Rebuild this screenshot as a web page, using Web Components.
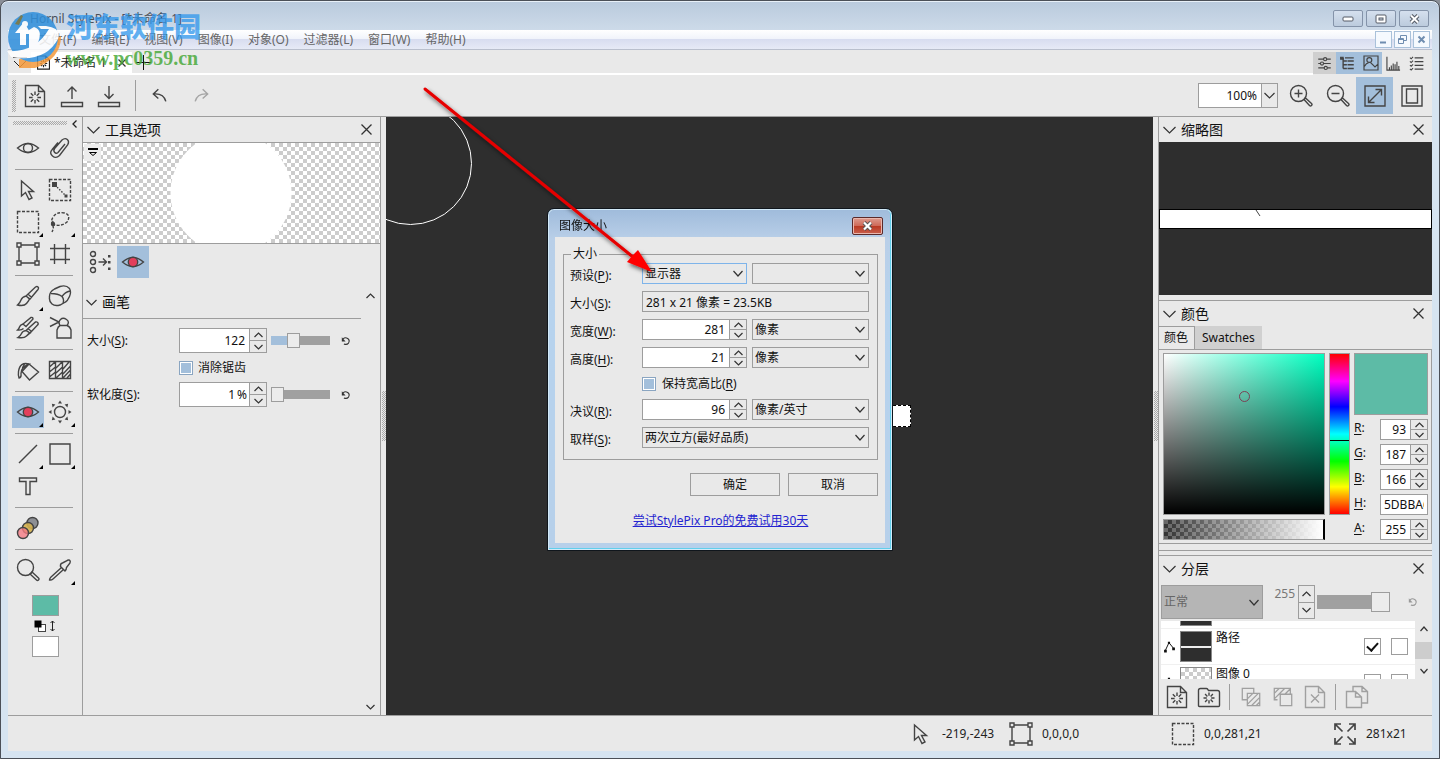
<!DOCTYPE html>
<html lang="zh-CN">
<head>
<meta charset="utf-8">
<title>Hornil StylePix - [*未命名 1]</title>
<style>
html,body{margin:0;padding:0;background:#8a8f98;}
body{font:12px/18px "Noto Sans","Noto Sans CJK SC",sans-serif;color:#111;overflow:hidden;}
</style>
</head>
<body>
<style-pix-window></style-pix-window>
<script>
const BASE = `
:host,*{box-sizing:border-box}
button{font:inherit;color:inherit;margin:0;padding:0;border:0;background:none;display:flex;align-items:center;justify-content:center}
input,select{font:inherit;color:inherit;margin:0;border-radius:0;outline:0}
svg{display:block}
u{text-underline-offset:2px}
.sp{flex:1}
.on{background:#a3bfdb}
`;
const DOTS = 'repeating-conic-gradient(#aaa 0 25%,transparent 0 50%) 0 0/2px 2px';
const FIELD = `
.spin,.combo{display:flex;border:1px solid #9d9d9d;background:#fff;height:21px;min-width:0}
.spin input,.combo input{flex:1;min-width:0;width:0;border:0;padding:0 4px;text-align:right;background:#fff;height:100%}
.spin .btns{width:17px;flex:none;display:flex;flex-direction:column;border-left:1px solid #9d9d9d;background:#e9e9e9}
.spin .btns button{flex:1;min-height:0}
.spin .btns button+button{border-top:1px solid #9d9d9d}
.pick{display:grid;height:21px;min-width:0}
.pick>*{grid-area:1/1}
.pick select{appearance:none;width:100%;height:100%;border:1px solid #9d9d9d;background:#e9e9e9;padding:0 2px}
.pick svg{place-self:center end;margin-right:4px;pointer-events:none}
input[type=checkbox]{appearance:none;width:14px;height:14px;border:1px solid #9d9d9d;background:#fff;flex:none}
input[type=checkbox].fill:checked{border-color:#8aa5c1;box-shadow:inset 0 0 0 1px #fff;background:#a3bfdb}
input[type=range]{appearance:none;background:none;width:59px;height:16px;padding:0}
input[type=range]::-webkit-slider-runnable-track{height:9px;background:linear-gradient(90deg,#a3bfdb var(--v,0%),#a0a0a0 var(--v,0%))}
input[type=range]::-webkit-slider-thumb{appearance:none;width:13px;height:15px;margin-top:-3px;background:#ececec;border:1px solid #9d9d9d}
`;
const chev = (w,h,dir='down',c='#333') => `<svg width="${w}" height="${h}" viewBox="0 0 ${w} ${h}" fill="none" stroke="${c}" stroke-width="1.2"><path d="${dir==='down'?`M.5 1 ${w/2} ${h-1} ${w-.5} 1`:`M.5 ${h-1} ${w/2} 1 ${w-.5} ${h-1}`}"/></svg>`;
const cross = (s,c='#333') => `<svg width="${s}" height="${s}" viewBox="0 0 ${s} ${s}" stroke="${c}" stroke-width="1.3"><path d="M.5 .5 ${s-.5} ${s-.5}M${s-.5} .5 .5 ${s-.5}"/></svg>`;
const spin = (id,v) => `<span class="spin"><input id="${id}" value="${v}"><span class="btns"><button aria-label="增加">${chev(9,6,'up')}</button><button aria-label="减少">${chev(9,6)}</button></span></span>`;
const pick = (id,v,label='') => `<span class="pick"><select id="${id}"${label?` aria-label="${label}"`:''}><option>${v}</option></select>${chev(10,7)}</span>`;

function define(name, css, html, after){
  const t = document.createElement('template');
  t.innerHTML = `<style>${BASE}${css}</style>${html}`;
  customElements.define(name, class extends HTMLElement{
    constructor(){ super(); this.attachShadow({mode:'open'}).append(t.content.cloneNode(true)); }
    connectedCallback(){ if(after) after(this, this.shadowRoot); }
  });
}

const burst = (x,y,r) => { let d=''; for(let i=0;i<8;i++){const a=i*Math.PI/4;d+=`M${(x+Math.cos(a)*r*.4).toFixed(1)} ${(y+Math.sin(a)*r*.4).toFixed(1)}L${(x+Math.cos(a)*r).toFixed(1)} ${(y+Math.sin(a)*r).toFixed(1)}`;} return `<path d="${d}"/>`; };
const ICONS = {
  newdoc:`<path d="M2.5 1.5h13l6 6v15h-19zM15.5 1.5v6h6"/>${burst(12,13.5,6)}`,
  folder:`<path d="M1.5 20.5v-15q0-2 2-2h6q1 0 2 2h9q2 0 2 2v13q0 1-1 1h-19q-1 0-1-1z"/>${burst(12,13,5.5)}`,
  open:`<path d="M12 15V3M7.500 7.500 12 3l4.500 4.500M1.500 18.500h21v4h-21z"/>`,
  save:`<path d="M12 2v12M7.500 10 12 14.500 16.500 10M1.500 18.500h21v4h-21z"/>`,
  undo:`<path d="M10 4 4 9.500 10 15M4.500 9.500q12-1 14.500 9" stroke-width="1.700"/>`,
  redo:`<path d="M14 4l6 5.500-6 5.500M19.500 9.500q-12-1-14.500 9" stroke-width="1.700"/>`,
  zoomin:`<circle cx="9.500" cy="9.500" r="8"/><path d="M5.500 9.500h8M9.500 5.500v8M15 15.500l5.500 6q1 1 2 0t0-2l-6-5.500z"/>`,
  zoomout:`<circle cx="9.500" cy="9.500" r="8"/><path d="M5.500 9.500h8M15 15.500l5.500 6q1 1 2 0t0-2l-6-5.500z"/>`,
  zoom:`<circle cx="9.500" cy="9.500" r="8"/><path d="M14 16l6.500 6q1 1 2 0t0-2l-6.500-6z"/>`,
  actual:`<path d="M2 2h20v20H2zM5.500 18.500l13-13M12.500 5.500h6v6M5.500 12.500v6h6"/>`,
  fit:`<path d="M2 2h20v20H2zM6.500 5h11v14h-11z"/>`,
  eye:`<path d="M1.500 12Q12 3 22.500 12 12 21 1.500 12z"/><circle cx="12" cy="12" r="4.500"/>`,
  redeye:`<path d="M1.500 12Q12 3 22.500 12 12 21 1.500 12z"/><circle cx="12" cy="12" r="4.700" fill="#e23f5c"/>`,
  clip:`<path d="M17 8l-7 8.500q-2 1.500-3.500-.3t.3-4L14 4q3-2.500 5.300-.5t.3 5.300L11.500 19.500q-3.500 3.500-7 .5t-.3-6.500L10 6.500"/>`,
  arrow:`<path d="M5.500 3v15l4-3.500 3.500 7 3-1.500-3.500-6.500h5z"/>`,
  seltrans:`<path stroke-dasharray="3 1.500" d="M1.500 1.500h21v21h-21z"/><path stroke-dasharray="1.500 1.500" d="M7 7l11 11"/><path fill="currentColor" stroke="none" d="M4 4h5v5H4zM16.500 16.500h3v3h-3z"/>`,
  rectsel:`<path stroke-dasharray="3 1.500" d="M1.500 1.500h21v21h-21z"/>`,
  lasso:`<path stroke-dasharray="3 1.500" d="M5 14.500q-3-3 .5-8t11-3.500q7 2 2.500 9-6 5-14 2.500zM5 11q-1 3 0 5t-1 6"/><circle cx="5" cy="14" r="1.500" fill="currentColor"/>`,
  transform:`<path d="M3 3h18v18H3z"/><path fill="#e9e9e9" d="M1 1h4v4H1zM19 1h4v4h-4zM1 19h4v4H1zM19 19h4v4h-4z"/>`,
  crop:`<path d="M6.500 2v20M17.500 2v20M2 6.500h20M2 17.500h20"/>`,
  brush:`<path d="M10 12l9.500-9q1.500-1 2.500 0t0 2.500L14 15zM10 12q-4 1-5 4t-3.500 5q6.500 1.500 9-1.500t3-4.500zM12 10l3.500 3.500"/>`,
  eraser:`<path d="M1.500 13.500Q1 8 6.500 5L12 2.500q6-2 9.500 2 2 3.500 0 8t-4 5.500L12 21q-5 1.500-8-1t-2.500-6.500zM3 9.500q7 0 11 3 2.500 3 1 6.500M14 12.500q3-4.500 8-5.500"/>`,
  brushes:`<path d="M7 8l8-6.500q2-.5 2 1.500l-7 7.500zM7 8q-3 1-3.500 3t-2 3q4 .5 6-1.500M10 14.500l9.500-8.500q2-.5 2.500 1t-.5 2L14 17zM10 14.500q-3.500.5-4.500 3t-3.500 4q6 1 8.500-1.500t3.500-3zM12 12.500l3.500 3"/>`,
  stamp:`<path d="M2 1.500l9 4.500-9 4.500M12 9.500Q10 6 12.500 3.500t6 0 .5 6M12 9.500h7q3 1 4 4.500v8H9v-8q1-3.500 3-4.500z"/>`,
  bucket:`<path d="M13 6l9.500 8-9 8-7.500-8.500zM13 6Q4 3.500 2.500 13.500q-.5 4 .5 6.500 2.500-.5 2-4.500 0-6 8-9.500zM9 5.500Q6 9 6 13.500"/>`,
  pattern:`<path d="M1.500 3.500h21v17h-21zM7.500 3.500v17M14.500 3.500v17M1.500 9 7 4M1.500 14 7.500 9M1.500 19l6-5M8 10l6-6M8 15l6.500-6M8 20l6.500-6M15 11l6-7M15 16l7.500-8M15 20l7.500-8M19 20l3.500-4"/>`,
  sun:`<circle cx="12" cy="12" r="5.500"/><g fill="currentColor" stroke="none">${[0,45,90,135,180,225,270,315].map(a=>`<path transform="rotate(${a} 12 12)" d="M10 3.500h4L12 .5z"/>`).join('')}</g>`,
  line:`<path d="M3 21 21 3"/>`,
  rect:`<path d="M2 2h20v20H2z"/>`,
  tee:`<path d="M3.500 4h17v3.500h-6.500v13h-4v-13H3.500z"/>`,
  blobs:`<circle cx="16.500" cy="7" r="5.500" fill="#8d8f94"/><circle cx="12" cy="12" r="5.500" fill="#d4b04d" fill-opacity=".9"/><circle cx="7" cy="17" r="5.500" fill="#f47b83" fill-opacity=".8"/>`,
  dropper:`<path d="M13.500 9.500 3 19q-1.500 1.500-1.500 3 2 .3 3.500-1L15.500 11.500M12.500 8.500l4.500 4.500q1.500-1.500 1.500-3.500l3.500-4.500q.8-2-.5-2.800T18.500 3L14.500 5q-2.500.5-2 3.500z"/>`,
  dots:`<circle cx="4" cy="4" r="2.500"/><circle cx="4" cy="12" r="2.500"/><circle cx="4" cy="20" r="2.500"/><path d="M9.500 12h8M14 8.500l3.500 3.500-3.500 3.500"/><path stroke="none" fill="currentColor" d="M19 5h2.500v2.500H19zM19 11h2.500v2.500H19zM19 17.500h2.500V20H19z"/>`,
  expand:`<path stroke-width="1.700" d="M2 8V2h6M2 2l7.500 7.500M16 2h6v6M22 2l-7.500 7.500M2 16v6h6M2 22l7.500-7.500M22 16v6h-6M22 22l-7.500-7.500"/>`,
  sliders:`<path d="M2 5h20M2 12h20M2 19h20"/><g fill="#cfcfcf"><circle cx="13" cy="5" r="2.500"/><circle cx="8" cy="12" r="2.500"/><circle cx="14" cy="19" r="2.500"/></g>`,
  tree:`<path d="M5 3v17M5 8h6M5 14h6M5 20h6M8 3h14M12 8h10M12 14h10M12 20h10" stroke-width="2.200"/><path fill="currentColor" d="M1 2h4v3H1z"/>`,
  picture:`<path d="M1.500 1.500h21v21h-21zM2 17q3-5 6.500-5.500M11 11l7 7 4-4"/><circle cx="9.500" cy="7.500" r="3.700"/>`,
  histo:`<path d="M1.500 1v21.500h21M5.500 22v-4M8.500 22v-7M11.500 22V12M14.500 22v-9M17.500 22V9M20.500 22v-6"/>`,
  list:`<path d="M9 3h14M9 9h14M9 15h14M9 21h14M1.500 2.500 3.500 4.500 6.500 1.500M1.500 8.500l2 2 3-3M1.500 14.500l2 2 3-3M1.500 20.500l2 2 3-3"/>`,
  merge:`<path d="M15 8V2.500H2.500V15H8M8 8h13.500v13.500H8zM8 14l6-6M8 20 20 8M13 21l8-8M18 21l3-3"/>`,
  below:`<path d="M9 9h12.500v12.500H9zM6 15H2.500V2.500H20V9M2.500 8l5.500-5.500M2.500 14 14 2.500M14 9l6-6"/>`,
  deldoc:`<path d="M2.500 1.500h13l6 6v15h-19zM15.500 1.500v6h6M8 9.500l8 8M16 9.500l-8 8"/>`,
  copydoc:`<path d="M8 6V1.500h9l5.500 5V18H17M17 1.500v5h5.500M1.500 6.500h9l6 5.500v10.500h-15zM10.500 6.500V12h6"/>`,
  reset:`<path d="M5 7q5-5 11-1t2 11q-4 5-11 2" stroke-width="2.600"/><path d="M2 3v10h9z" fill="currentColor" stroke="none"/>`,
  path:`<path d="M4 20 11 5l9 11"/><path fill="currentColor" stroke="none" d="M2 18h5v5H2zM9 3h4v4H9zM17 14h5v5h-5z"/>`
};
customElements.define('pix-icon', class extends HTMLElement{
  constructor(){ super(); this.attachShadow({mode:'open'}); }
  connectedCallback(){
    const s = this.getAttribute('size') || 24;
    this.shadowRoot.innerHTML = `<style>:host{display:block;flex:none;width:${s}px;height:${s}px}svg{display:block}</style>
    <svg width="${s}" height="${s}" viewBox="0 0 24 24" fill="none" stroke="currentColor" stroke-width="${s<20?1.8:1.4}">${ICONS[this.getAttribute('name')]||''}</svg>`;
  }
});

define('title-bar', `
:host{display:flex;height:29px;align-items:flex-start;padding:8px 3px 0 22px;gap:3px;color:#4a505a}
h1{font:inherit;font-size:12px;line-height:20px;margin:0;flex:1}
button{width:30px;height:17px;border:1px solid #8493a9;border-radius:2px;background:linear-gradient(#d5e0ee,#bccbdd);margin-top:1px}
`, `<h1>Hornil StylePix - [*未命名 1]</h1>
<button aria-label="最小化"><svg width="12" height="6"><rect x="1" y="1" width="10" height="4" rx="1" fill="#fff" stroke="#555b66"/></svg></button>
<button aria-label="最大化"><svg width="12" height="10"><rect x="1" y="1" width="10" height="8" rx="1" fill="#fff" stroke="#555b66"/><rect x="4" y="4" width="4" height="2" fill="#ccd6e4" stroke="#555b66"/></svg></button>
<button aria-label="关闭"><svg width="13" height="10" fill="none"><path d="M3 1.500l7 7M10 1.500l-7 7" stroke="#555b66" stroke-width="4"/><path d="M3 1.500l7 7M10 1.500l-7 7" stroke="#fff" stroke-width="2"/></svg></button>`);

define('menu-bar', `
:host{display:flex;height:20px;align-items:center;padding:0 2px 0 31px;background:linear-gradient(#fff,#f1f4fb 45%,#d8ddf0 50%,#e6eaf6);border-bottom:1px solid #b9bfcd;color:#666}
nav{display:flex;gap:15px;flex:1}
a{color:inherit;text-decoration:none;white-space:nowrap}
button{width:17px;height:17px;border:1px solid #a9c1da;background:#f5f9fe;margin-left:2px;color:#6f8db0}
`, `<nav><a href="#">文件(F)</a><a href="#">编辑(E)</a><a href="#">视图(V)</a><a href="#">图像(I)</a><a href="#">对象(O)</a><a href="#">过滤器(L)</a><a href="#">窗口(W)</a><a href="#">帮助(H)</a></nav>
<button aria-label="最小化文档"><svg width="9" height="9"><path d="M1 7.500h6" stroke="currentColor" stroke-width="2"/></svg></button>
<button aria-label="还原文档"><svg width="9" height="9" fill="none" stroke="currentColor"><path d="M2.500 3V.5h6v5H6M.5 3.500h5v5h-5zM.5 4.500h5"/></svg></button>
<button aria-label="关闭文档"><svg width="9" height="9"><path d="M1.500 1.500l6 6M7.500 1.500l-6 6" stroke="currentColor" stroke-width="2"/></svg></button>`);

define('tab-strip', `
:host{display:flex;height:25px;background:#e9e9e9;align-items:stretch;padding-top:2px;color:#222}
.tabs{flex:1;display:flex;border-bottom:2px solid #fff}
.drop{width:23px}
.tab{display:flex;align-items:center;gap:3px;width:101px;background:#fff;padding:0 6px 0 5px}
.tab span{flex:1;white-space:nowrap}
.add{width:23px}
.views{display:flex;padding-right:4px;color:#444}
.views button{width:23px;height:22px}
.first{background:#cfcfcf}
`, `<div class="tabs"><button class="drop" aria-label="文档列表"><svg width="16" height="14" fill="none" stroke="#222"><path d="M1 1.500h14M2 5l6 6 6-6"/></svg></button>
<div class="tab"><pix-icon name="newdoc" size="15"></pix-icon><span>*未命名 1</span><button aria-label="关闭标签">${cross(8)}</button></div>
<button class="add" aria-label="新建标签"><svg width="15" height="15" stroke="#111"><path d="M0 7.500h15M7.500 0v15"/></svg></button></div>
<div class="views"><button class="first" aria-label="工具选项"><pix-icon name="sliders" size="15"></pix-icon></button><button class="on" aria-label="分层"><pix-icon name="tree" size="15"></pix-icon></button><button class="on" aria-label="缩略图"><pix-icon name="picture" size="16"></pix-icon></button><button aria-label="直方图"><pix-icon name="histo" size="15"></pix-icon></button><button aria-label="历史"><pix-icon name="list" size="15"></pix-icon></button></div>`);

define('tool-bar', FIELD+`
:host{display:flex;height:42px;background:#e9e9e9;border-bottom:1px solid #9d9d9d;align-items:center;padding:0 2px 0 4px;color:#444}
.grip{width:4px;height:32px;background:${DOTS}}
button{width:37px;height:37px;flex:none}
.sep{width:1px;height:31px;background:#9d9d9d;margin:0 5px 0 8px}
.redo{color:#a5a5a5;margin-left:4px}
.combo{width:80px;height:25px;margin-right:4px;color:#111}
.combo button{width:16px;height:auto;border-left:1px solid #9d9d9d;background:#e9e9e9}
`, `<span class="grip"></span>
<button aria-label="新建"><pix-icon name="newdoc"></pix-icon></button><button aria-label="打开"><pix-icon name="open"></pix-icon></button><button aria-label="保存"><pix-icon name="save"></pix-icon></button>
<span class="sep"></span><button aria-label="撤消"><pix-icon name="undo" size="20"></pix-icon></button><button class="redo" aria-label="重做"><pix-icon name="redo" size="20"></pix-icon></button><span class="sp"></span>
<span class="combo"><input aria-label="缩放" value="100%"><button aria-label="缩放列表">${chev(11,7)}</button></span>
<button aria-label="放大"><pix-icon name="zoomin"></pix-icon></button><button aria-label="缩小"><pix-icon name="zoomout"></pix-icon></button><button class="on" aria-label="实际大小"><pix-icon name="actual"></pix-icon></button><button aria-label="适合窗口"><pix-icon name="fit"></pix-icon></button>`);

const tool = (n,l,o='') => `<button class="${o}" aria-label="${l}"><pix-icon name="${n}"></pix-icon></button>`;
define('tool-box', `
:host{display:block;width:75px;flex:none;background:#e9e9e9;border-right:1px solid #9d9d9d;color:#444;padding-left:4px}
.top{display:flex;height:15px;align-items:flex-start;padding:3px 5px 0 1px;gap:5px}
.grip{flex:1;height:4px;margin-top:1px;background:${DOTS}}
.grid{display:grid;grid-template-columns:32px 32px}
.grid button{height:32px;position:relative}
.more::after{content:"";position:absolute;right:1px;bottom:1px;border:2px solid #000;border-top-color:transparent;border-left-color:transparent}
hr{grid-column:1/-1;width:58px;height:1px;border:0;background:#9d9d9d;margin:5px 0 4px 3px}
.colors{display:flex;flex-direction:column;align-items:center;padding:9px 4px 0 0;gap:4px}
.sw{width:27px;height:21px;border:1px solid #9d9d9d;background:#fff}
.fg{background:#5dbba6}
`, `<div class="top"><span class="grip"></span><svg width="5" height="8" fill="none" stroke="#222" stroke-width="1.300"><path d="M4.500.5 1 4l3.500 3.500"/></svg></div>
<div class="grid">${tool('eye','查看')}${tool('clip','附件')}<hr>${tool('arrow','选择')}${tool('seltrans','变换选区')}${tool('rectsel','矩形选区','more')}${tool('lasso','套索','more')}${tool('transform','变换')}${tool('crop','裁剪')}<hr>${tool('brush','画笔','more')}${tool('eraser','橡皮擦')}${tool('brushes','克隆画笔')}${tool('stamp','图章')}<hr>${tool('bucket','填充')}${tool('pattern','渐变')}<hr>${tool('redeye','红眼','on more')}${tool('sun','亮度','more')}<hr>${tool('line','直线','more')}${tool('rect','矩形','more')}${tool('tee','文本')}<span></span><hr>${tool('blobs','颜色')}<span></span><hr>${tool('zoom','缩放')}${tool('dropper','吸管','more')}</div>
<div class="colors"><button class="sw fg" aria-label="前景色"></button><svg width="22" height="12"><rect x="4.500" y="4.500" width="7" height="7" fill="#fff" stroke="#444"/><rect x=".5" y=".5" width="7" height="7" fill="#000"/><path d="M18.500 1v10M16.500 3l2-2 2 2M16.500 9l2 2 2-2" fill="none" stroke="#222"/></svg><button class="sw" aria-label="背景色"></button></div>`);

define('dock-panel', `
:host{display:flex;flex-direction:column;min-height:0;background:#e9e9e9}
header{display:flex;height:25px;flex:none;align-items:center;padding:0 8px 0 4px;gap:5px}
h2{flex:1;margin:0;font:inherit;font-size:14px;line-height:20px}
`, `<header>${chev(13,8)}<h2></h2><button aria-label="关闭面板">${cross(11)}</button></header><slot></slot>`,
(el,r)=>{ r.querySelector('h2').textContent = el.getAttribute('heading'); });

define('tool-options', FIELD+`
:host{display:flex;flex-direction:column;width:298px;flex:none;background:#e9e9e9;border-right:1px solid #9d9d9d;min-height:0}
.preview{height:102px;border:1px solid #9d9d9d;border-width:1px 0;background:radial-gradient(circle 61px at 148px 50px,#fff 60px,transparent 61px),repeating-conic-gradient(#ccc 0 25%,#fff 0 50%) 0 0/8px 8px}
.preview button{width:17px;height:17px;margin:1px;background:#ececec}
.modes{display:flex;height:40px;padding:2px;color:#444}
.modes button{width:32px;height:32px}
.body{display:flex;flex:1;min-height:0}
.main{flex:1}
.scroll{display:flex;flex-direction:column;justify-content:space-between;width:19px;padding:9px 0 5px;align-items:center;color:#555}
h3{margin:0;font:inherit;font-size:14px;line-height:20px;display:flex;align-items:center;gap:5px;height:35px;border-bottom:1px solid #9d9d9d;padding:2px 3px 0}
.form{display:grid;grid-template-columns:88px 88px 59px auto;column-gap:4px;row-gap:3px;align-items:center;padding:9px 4px}
.form .spin{height:25px}
.check{grid-column:2/-1;display:flex;gap:5px;align-items:center;height:23px}
.rst{margin-left:7px;justify-self:start;color:#333}
.pct input{padding-right:0}.pct i{font-style:normal;line-height:23px;padding:0 2px}
`, `<dock-panel heading="工具选项"></dock-panel>
<div class="preview"><button aria-label="预览选项"><svg width="10" height="9" fill="none" stroke="#000"><path d="M0 1h10" stroke-width="2"/><path d="M1.500 4.500h7L5 7.500z"/></svg></button></div>
<div class="modes"><button aria-label="间距"><pix-icon name="dots"></pix-icon></button><button class="on" aria-label="红眼"><pix-icon name="redeye"></pix-icon></button></div>
<div class="body"><div class="main"><h3>${chev(11,7)}画笔</h3>
<div class="form"><label for="bs">大小(<u>S</u>):</label>${spin('bs',122)}<input type="range" value="35" style="--v:30%" aria-label="大小"><button class="rst" aria-label="重置大小"><pix-icon name="reset" size="10"></pix-icon></button>
<span class="check"><input type="checkbox" class="fill" id="aa" checked><label for="aa">消除锯齿</label></span>
<label for="sf">软化度(<u>S</u>):</label>${spin('sf','1').replace('class="spin"','class="spin pct"').replace('<span class="btns">','<i>%</i><span class="btns">')}<input type="range" value="0" aria-label="软化度"><button class="rst" aria-label="重置软化度"><pix-icon name="reset" size="10"></pix-icon></button></div></div>
<div class="scroll">${chev(9,6,'up')}${chev(9,6)}</div></div>`);

define('split-grip', `
:host{display:flex;align-items:center;justify-content:center;width:5px;flex:none;background:#e9e9e9}
i{width:4px;height:50px;background:${DOTS}}
`, `<i></i>`);

define('canvas-view', `
:host{display:flex;flex:1;min-width:0;align-items:center;justify-content:center;background:#2e2e2e;position:relative;overflow:hidden}
.doc{width:282px;height:22px;background:#fff;border:1px dashed #000}
.brush{position:absolute;left:-37px;top:-15px;width:123px;height:123px;border:1px solid #fff;border-radius:50%}
`, `<div class="doc"></div><div class="brush"></div>`);

define('thumb-view', `
:host{display:flex;align-items:center;height:153px;background:#2e2e2e}
div{flex:1;height:20px;background:#fff;border:1px solid #000}
svg{margin-left:35%}
`, `<div><svg width="8" height="8"><path d="M1 0l4 6" stroke="#444"/></svg></div>`);

const ch = (id,k,v) => `<label for="${id}"><u>${k}</u>:</label>${spin(id,v)}`;
define('color-panel', FIELD+`
:host{display:block;padding-bottom:6px}
.tabs{display:flex;height:23px}
.tabs button{padding:0 7px;background:#d0d0d0}
.tabs .cur{background:#e9e9e9;border:1px solid #9d9d9d;border-width:1px 1px 0 0;padding:0 6px 0 5px}
.box{display:grid;grid-template-columns:minmax(0,162px) 21px 1fr;gap:4px;padding:3px 3px 3px 4px;border:1px solid #9d9d9d;border-left:0}
.sv{height:162px;border:1px solid #9d9d9d;background:linear-gradient(transparent,#000),linear-gradient(90deg,#fff,#00ffc0);position:relative}
.sv i{position:absolute;left:47%;top:23%;width:11px;height:11px;border:1px solid #7b4154;border-radius:50%}
.hue{border:1px solid #9d9d9d;background:linear-gradient(#000,#000) 0 86px/100% 1px no-repeat,linear-gradient(red,#f0f 17%,#00f 33%,#0ff 50%,#0f0 67%,#ff0 83%,red)}
.alpha{height:21px;border:1px solid #9d9d9d;border-right:2px solid #000;background:linear-gradient(90deg,transparent,#fff),repeating-conic-gradient(#333 0 25%,#666 0 50%) 0 0/8px 8px}
.rgb{grid-row:1/3;grid-column:3;display:grid;grid-template-columns:26px minmax(0,48px);row-gap:4px;align-content:start}
.now{grid-column:1/-1;height:62px;border:1px solid #9d9d9d;background:#5dbba6}
.hex{height:21px;border:1px solid #9d9d9d;width:100%;padding:0 3px}
.spin input{padding:0 4px 0 0}
label{line-height:18px}
`, `<div class="tabs"><button class="cur">颜色</button><button>Swatches</button></div>
<div class="box"><div class="sv"><i></i></div><div class="hue"></div>
<div class="rgb"><div class="now"></div>${ch('r','R',93)}${ch('g','G',187)}${ch('b','B',166)}<label for="h"><u>H</u>:</label><input class="hex" id="h" value="5DBBA6">${ch('a','A',255)}</div>
<div class="alpha"></div></div>`);

const layer = (name,kind) => `<li><pix-icon name="path" size="13"></pix-icon><span class="th ${kind}"></span><span class="nm">${name}</span><input type="checkbox" aria-label="显示 ${name}" ${kind==='clear'?'':'checked'}><input type="checkbox" aria-label="锁定 ${name}"></li>`;
define('layer-panel', FIELD+`
:host{display:flex;flex-direction:column;flex:1;min-height:0;padding-left:2px}
.top{display:flex;height:40px;flex:none;align-items:flex-start;padding:4px 14px 0 0;color:#777}
.top .pick{width:102px;height:34px}
.top select{background:#b5b5b5;color:#666;opacity:1}
.spin{height:34px;background:none;border:0;width:52px}
.spin input{background:none;height:18px;padding:0 3px 0 0;color:#777}
.spin .btns{border:1px solid #9d9d9d}
input[type=range]{width:73px;height:34px;margin:0 0 0 2px}
input[type=range]::-webkit-slider-runnable-track{height:14px}
input[type=range]::-webkit-slider-thumb{width:19px;height:20px;margin-top:-3px}
.mid{display:flex;flex:1;min-height:0}
ul{list-style:none;margin:0;padding:0;flex:1;background:#fff;height:100%;overflow:hidden}
li{display:flex;height:36px;gap:4px;align-items:center;padding:0 7px 0 2px;border-top:1px solid #f0f0f0}
.th{width:32px;height:31px;border:1px solid #888;background:#2e2e2e}
.img{background:linear-gradient(transparent 14px,#eee 14px,#eee 16px,transparent 16px) #2e2e2e}
.clear{background:repeating-conic-gradient(#ccc 0 25%,#fff 0 50%) 0 0/8px 8px}
.nm{flex:1;align-self:flex-start}
li input[type=checkbox]{width:17px;height:17px;margin-left:6px;display:grid;place-items:center}
li input:checked::after{content:"";width:9px;height:5px;border:solid #111;border-width:0 0 2px 2px;transform:rotate(-48deg);margin-bottom:3px}
.scroll{width:17px;display:flex;flex-direction:column;align-items:center;justify-content:space-between;padding:5px 0}
.scroll i{width:17px;height:17px;background:#cdcdcd}
.acts{display:flex;height:36px;flex:none;align-items:center;color:#444}
.acts button{width:32px;height:32px}
.acts .off{color:#a0a0a0}
.sep{width:1px;height:26px;background:#9d9d9d;margin:0 5px 0 4px}
`, `<div class="top">${pick('mode','正常','混合模式').replace('<select','<select disabled')}${spin('op',255).replace('<input','<input aria-label="不透明度"')}<input type="range" value="100" aria-label="不透明度滑块"><span class="sp"></span><button style="height:34px;color:#999" aria-label="重置"><pix-icon name="reset" size="10"></pix-icon></button></div>
<div class="mid"><ul>${layer('','dark')}${layer('路径','img')}${layer('图像 0','clear')}</ul><div class="scroll">${chev(8,6,'up')}<i></i>${chev(8,6)}</div></div>
<div class="acts"><button aria-label="新建图层"><pix-icon name="newdoc"></pix-icon></button><button aria-label="新建组"><pix-icon name="folder"></pix-icon></button><span class="sep"></span><button class="off" aria-label="合并"><pix-icon name="merge" size="22"></pix-icon></button><button class="off" aria-label="向下合并"><pix-icon name="below" size="22"></pix-icon></button><button class="off" aria-label="删除"><pix-icon name="deldoc"></pix-icon></button><span class="sep"></span><button class="off" aria-label="复制"><pix-icon name="copydoc"></pix-icon></button></div>`);

define('status-bar', `
:host{display:flex;height:36px;flex:none;background:#e9e9e9;border-top:1px solid #9d9d9d;justify-content:flex-end;color:#222}
span{display:flex;align-items:center;gap:9px;width:162px}
pix-icon{color:#444}
span:first-of-type{width:100px}span:last-of-type{width:99px}
`, `<span><pix-icon name="arrow"></pix-icon>-219,-243</span><span><pix-icon name="transform"></pix-icon>0,0,0,0</span><span><pix-icon name="rectsel"></pix-icon>0,0,281,21</span><span><pix-icon name="expand"></pix-icon>281x21</span>`);

define('size-dialog', FIELD+`
:host{position:fixed;inset:0;margin:auto;width:346px;height:343px;display:flex;flex-direction:column;border:1px solid #10161c;border-radius:7px 7px 0 0;padding:0 7px 7px;background:linear-gradient(#9fbbdb,#b9cfe8 30px,#b7d3ee 110px,#b7d0ea);box-shadow:inset 0 0 0 1px #d3eaf8,inset -1px -1px 0 1px #62cfec}
header{display:flex;height:28px;flex:none;align-items:center;padding:6px 2px 0 4px}
h2{flex:1;margin:0;font:inherit}
header button{width:31px;height:18px;border:1px solid #5b2a2a;border-radius:2px;background:linear-gradient(#dd9b8f,#cf6a59 48%,#b93822 50%,#c9604d);box-shadow:inset 0 0 0 1px #eab7ae}
main{flex:1;background:#e9e9e9;padding:8px 7px 0 8px}
fieldset{margin:0;padding:0 8px 11px 6px;border:1px solid #9d9d9d;min-width:0}
legend{padding:0 2px;margin-left:1px;line-height:18px}
.g{display:grid;grid-template-columns:67px 105px 1fr;gap:7px 5px}
label{line-height:18px;padding-top:4px;height:21px}
.wide{grid-column:2/-1}
.info{border:1px solid #9d9d9d;height:21px;line-height:19px;background:#e9e9e9;padding:0 3px;width:100%}
.chk{display:flex;gap:6px;align-items:center;height:17px}
.chk label{padding:0;height:18px}
.wide.pick{display:grid}
.focus select{border-color:#7eb4ea}
.ok{display:flex;justify-content:flex-end;gap:8px;padding-top:13px}
.ok button{width:90px;height:23px;border:1px solid #9d9d9d}
p{margin:16px 0 0;text-align:center}
a{color:#2424d0}
`, `<header><h2>图像大小</h2><button aria-label="关闭"><svg width="13" height="10" fill="none"><path d="M3 1.500l7 7M10 1.500l-7 7" stroke="#555" stroke-width="4"/><path d="M3 1.500l7 7M10 1.500l-7 7" stroke="#fff" stroke-width="2.200"/></svg></button></header>
<main><fieldset><legend>大小</legend><div class="g">
<label for="pre">预设(<u>P</u>):</label>${pick('pre','显示器').replace('class="pick"','class="pick focus"')}${pick('pre2','','预设尺寸')}
<label for="inf">大小(<u>S</u>):</label><span class="wide"><input class="info" id="inf" readonly value="281 x 21 像素 = 23.5KB"></span>
<label for="w">宽度(<u>W</u>):</label>${spin('w',281)}${pick('wu','像素','宽度单位')}
<label for="hh">高度(<u>H</u>):</label>${spin('hh',21)}${pick('hu','像素','高度单位')}
<span class="wide chk"><input type="checkbox" class="fill" id="keep" checked><label for="keep">保持宽高比(<u>R</u>)</label></span>
<label for="res">决议(<u>R</u>):</label>${spin('res',96)}${pick('ru','像素/英寸','分辨率单位')}
<label for="smp">取样(<u>S</u>):</label>${pick('smp','两次立方(最好品质)').replace('class="pick"','class="pick wide"')}
</div></fieldset>
<div class="ok"><button>确定</button><button>取消</button></div>
<p><a href="#">尝试StylePix Pro的免费试用30天</a></p></main>`);

define('pointer-arrow', `
:host{position:absolute;left:415px;top:80px;pointer-events:none}
`, `<svg width="250" height="206"><defs><filter id="s" x="-10%" y="-10%" width="130%" height="130%"><feDropShadow dx="2" dy="3" stdDeviation="2" flood-color="#000" flood-opacity=".6"/></filter></defs><g filter="url(#s)"><path d="M9 8 217 176" stroke="#e60000" stroke-width="3" stroke-linecap="round"/><path d="M236 191 211 181 216 175 222 169z" fill="#f00"/></g></svg>`);

define('site-mark', `
:host{position:absolute;left:4px;top:8px;pointer-events:none;display:flex;gap:1px}
svg{opacity:.85}
b{display:block;white-space:nowrap}
.cn{font:900 27px/34px "Noto Sans CJK SC",sans-serif;color:rgba(46,150,236,.75)}
.en{font:bold 20px/20px "Liberation Serif",serif;color:rgba(75,170,60,.85);padding-top:5px}
`, `<svg width="60" height="60" viewBox="0 0 60 60"><path d="M30 59Q56 50 56 27l-14 7Q38 48 14 50v9z" fill="#f59a3c"/><circle cx="28" cy="28" r="25" fill="#2f8fdb"/><path d="M2 42Q30 44 44 20h-8l-3-3h8q16 2 12 13Q40 54 6 48z" fill="#fff"/><path d="M19 13 10 24h5v12h6V25h5z" fill="#fff"/><circle cx="20" cy="15" r="3" fill="#fff"/><path d="M29 18q10 3 3 18l-8 4V21z" fill="#fff"/><path d="M10 15 16 6l2 1-4 9z" fill="#6b6c3a"/></svg>
<div><b class="cn">河东软件园</b><b class="en">www.pc0359.cn</b></div>`);

define('style-pix-window', `
:host{display:flex;flex-direction:column;height:100vh;border:1px solid #4b5058;border-radius:8px 8px 0 0;padding:0 7px 7px;background:linear-gradient(#b9cadd,#cfdcea 32px,#d6e4f1 60px);box-shadow:inset 0 1px 0 #e8f0f8;position:relative}
.work{display:flex;flex:1;min-height:0}
aside{width:274px;flex:none;display:flex;flex-direction:column;border-left:1px solid #9d9d9d;background:#e9e9e9}
aside dock-panel+dock-panel{margin-top:5px;border-top:1px solid #9d9d9d}
.color{border-bottom:1px solid #9d9d9d}
aside dock-panel+.layers{flex:1;margin-top:4px}
`, `<title-bar></title-bar><menu-bar></menu-bar><tab-strip></tab-strip><tool-bar></tool-bar>
<div class="work"><tool-box></tool-box><tool-options></tool-options><split-grip></split-grip><canvas-view></canvas-view><split-grip></split-grip>
<aside><dock-panel heading="缩略图"><thumb-view></thumb-view></dock-panel><dock-panel class="color" heading="颜色"><color-panel></color-panel></dock-panel><dock-panel class="layers" heading="分层"><layer-panel></layer-panel></dock-panel></aside></div>
<status-bar></status-bar><size-dialog></size-dialog><site-mark></site-mark><pointer-arrow></pointer-arrow>`,
(el,r)=>{ r.querySelector('layer-panel').shadowRoot.querySelector('ul').scrollTop = 29; });
</script>
</body>
</html>
